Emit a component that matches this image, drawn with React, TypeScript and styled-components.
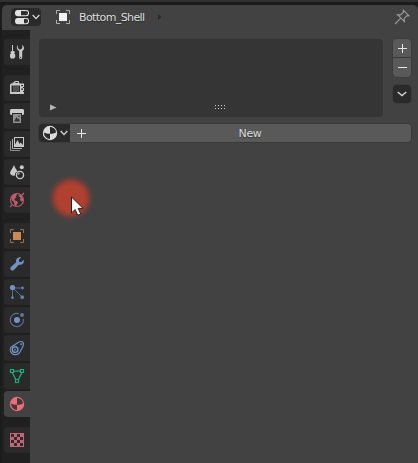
import React from "react";
import styled, { createGlobalStyle } from "styled-components";

const GlobalStyle = createGlobalStyle`
  * { box-sizing: border-box; }
  html, body { margin: 0; background: #1e1e1e; overflow: hidden; }
  body { font-family: "DejaVu Sans", sans-serif; font-size: 11px; color: #dcdcdc; }
  svg { display: block; flex: none; }
  button { font: inherit; color: inherit; padding: 0; margin: 0; border: 0; cursor: default; }
`;

const Editor = styled.div`
  position: relative;
  width: 418px;
  height: 463px;
  display: flex;
  flex-direction: column;
  border-top: 2px solid #303030;
  padding: 3px 0 0 2px;
  background: #1c1c1c;
`;

const Header = styled.header`
  flex: none;
  height: 25px;
  display: flex;
  align-items: center;
  padding: 0 8px 1px 9px;
  background: #424242;
  border-radius: 5px 5px 0 0;
`;

const EditorSelect = styled.button`
  display: flex;
  align-items: center;
  gap: 3px;
  width: 30px;
  height: 18px;
  padding-left: 3px;
  background: #2a2a2a;
  border-radius: 4px;
`;

const Crumb = styled.div`
  display: flex;
  align-items: center;
  flex: 1;
  padding-left: 14px;
`;

const CrumbName = styled.span`
  width: 79px;
  margin-left: 8px;
  padding-top: 1px;
  line-height: 14px;
  white-space: nowrap;
  text-shadow: 0 1px 1px rgba(0, 0, 0, 0.35);
  letter-spacing: -0.6px;
`;

const Body = styled.div`
  flex: 1;
  display: flex;
  min-height: 0;
`;

const TabBar = styled.nav`
  width: 28px;
  display: flex;
  flex-direction: column;
  gap: 10px;
  padding: 9px 0 0 2px;
  background: #202020;
`;

const TabGroup = styled.div`
  display: flex;
  flex-direction: column;
  gap: 2px;
`;

const Tab = styled.button<{ $active?: boolean; $color: string }>`
  width: 26px;
  height: 26px;
  display: flex;
  align-items: center;
  justify-content: center;
  border-radius: 4px 0 0 4px;
  background: ${(p) => (p.$active ? "#424242" : "#2a2a2a")};
  color: ${(p) => p.$color};
`;

const Panel = styled.main`
  flex: 1;
  display: flex;
  flex-direction: column;
  gap: 7px;
  padding: 9px 6px 0 9px;
  background: #424242;
`;

const SlotArea = styled.section`
  display: flex;
  gap: 10px;
  height: 78px;
`;

const SlotList = styled.div`
  width: 344px;
  display: grid;
  grid-template-columns: 164px 12px 1fr;
  align-items: end;
  padding: 0 11px 6px;
  background: #353535;
  border-radius: 4px;
`;

const SlotTools = styled.div`
  width: 18px;
  display: flex;
  flex-direction: column;
`;

const ToolButton = styled.button<{ $place: "top" | "bottom" | "menu" }>`
  width: 18px;
  height: ${(p) => (p.$place === "bottom" ? 19 : 18)}px;
  display: flex;
  align-items: center;
  justify-content: center;
  margin-top: ${(p) => ({ top: 0, bottom: 1, menu: 8 })[p.$place]}px;
  background: ${(p) => (p.$place === "menu" ? "#2a2a2a" : "#595959")};
  box-shadow: 0 0 0 0.5px #373737;
  border-radius: ${(p) => ({ top: "4px 4px 0 0", bottom: "0 0 4px 4px", menu: "4px" })[p.$place]};
`;

const MaterialRow = styled.div`
  display: flex;
  height: 18px;
  width: 372px;
  border-radius: 4px;
  box-shadow: 0 0 0 1px #3a3a3a;
`;

const BrowseButton = styled.button`
  width: 31px;
  display: flex;
  align-items: center;
  gap: 2px;
  padding-left: 3px;
  background: #2a2a2a;
  border-radius: 4px 0 0 4px;
`;

const NewButton = styled.button`
  flex: 1;
  display: grid;
  grid-template-columns: 12px 1fr;
  align-items: center;
  padding: 0 1px 0 6px;
  background: #595959;
  border-radius: 0 4px 4px 0;
  text-shadow: 0 1px 1px rgba(0, 0, 0, 0.4);
`;

const NewLabel = styled.span`
  padding-left: 2px;
  letter-spacing: -0.3px;
`;

const ClickGlow = styled.div`
  position: absolute;
  left: 48px;
  top: 173px;
  width: 46px;
  height: 46px;
  border-radius: 50%;
  background: radial-gradient(circle closest-side, #b0402f 0 58%, rgba(170, 62, 47, 0.78) 72%, rgba(150, 60, 48, 0.32) 87%, transparent 100%);
`;

const Pointer = styled.svg`
  position: absolute;
  left: 70px;
  top: 193px;
`;

const Icon = ({ children, size = 16 }: { children: React.ReactNode; size?: number }) => (
  <svg width={size} height={size} viewBox="0 0 16 16" fill="currentColor">
    {children}
  </svg>
);

const Chevron = ({ width = 8 }: { width?: number }) => (
  <svg width={width} height="6" viewBox={`0 0 ${width} 6`} fill="none" stroke="#d8d8d8" strokeWidth="1.3">
    <path d={`M.7 1 ${width / 2} 4.6 ${width - 0.7} 1`} />
  </svg>
);

const Plus = () => (
  <svg width="11" height="11" viewBox="0 0 11 11" stroke="#e6e6e6">
    <path d="M1 5.5H10M5.5 1V10" />
  </svg>
);

const EditorIcon = () => (
  <svg width="15" height="16" viewBox="0 0 15 16">
    <rect x="1" y="1" width="14" height="6.2" rx="2.9" fill="#e2e2e2" />
    <rect x="1" y="9" width="14" height="6.2" rx="2.9" fill="#e2e2e2" />
    <path d="M7 2h5a2.1 2.1 0 0 1 0 4.2H7z" fill="#303030" />
    <path d="M10 10h2a2.1 2.1 0 0 1 0 4.2h-2z" fill="#303030" />
  </svg>
);

const ObjectIcon = ({ solid }: { solid?: string }) => (
  <Icon>
    <path d="M1.5 5V1.5H5M11 1.5h3.5V5M14.5 11v3.5H11M5 14.5H1.5V11" fill="none" stroke="currentColor" opacity=".7" />
    <rect x="4" y="4" width="8" height="8" fill={solid ?? "currentColor"} />
  </Icon>
);

const MaterialIcon = ({ dark }: { dark: string }) => (
  <Icon>
    <circle cx="8" cy="8" r="7.2" />
    <path d="M8 2.1c3.4 0 5.9 2.4 6 5.4-1.8 1-3.8 1.4-6 1.3z" fill={dark} />
    <path d="M2 7.6c1.8.9 3.8 1.3 6 1.2V14C4.600 14 2 11.200 2 7.600z" fill={dark} />
  </Icon>
);

const ToolIcon = () => (
  <Icon>
    <path d="M3 1h1v6h1l1 1.2-.8 1.3 1 .9v2.7L5 14.5H2L1 13v-2.6l1-.9-.7-1.3L2 7.2h1z" />
    <path d="M8.8 1v3l1.6 1.6h1.3L13.3 4V1c1.3 1 1.9 2.2 1.6 3.7-.1 1-.8 1.8-1.7 2.3v7c-.4 1.4-2.6 1.4-3 0V7C8 6.2 7 3 8.8 1z" />
    <circle cx="11.7" cy="13.4" r=".6" fill="#2a2a2a" />
  </Icon>
);

const RenderIcon = () => (
  <Icon>
    <path fillRule="evenodd" d="M1 4.500 2 3.500h1.500V2.500H5L5.500 1h4l1 2.500H15V7h-1v1h1v3h-1v1h1v2H1zM2.500 5.500v6.500h8.500V5.500zM6.300 2v1h2.500V2zM12.300 5v1.300H14V5zM12.300 8.500v1.500H14V8.500z" />
    <path d="M4 6.500h6v1H4zM4 8.500h6v1H4zM4 10.500h6v1H4z" opacity=".5" />
  </Icon>
);

const OutputIcon = () => (
  <Icon>
    <path d="M2 1h12l1 1v4l-1 1h-1V5H3v2H2L1 6V2z" />
    <path d="M4 6h8v9H4z" opacity=".65" />
    <path d="M5 13.5 7.5 9l1.4 2.2.8-1L11 13.5z" fill="#333" />
    <circle cx="10" cy="8.4" r=".8" fill="#333" />
  </Icon>
);

const LayersIcon = () => (
  <Icon>
    <path fillRule="evenodd" d="M5 1h10v10H5zM6 2v6.5L8.5 4l2 4 1.2-1.5L14 9V2z" />
    <path d="M3.5 3v9.5H13" fill="none" stroke="currentColor" opacity=".85" />
    <path d="M1.5 5v9.5H11" fill="none" stroke="currentColor" opacity=".65" />
  </Icon>
);

const SceneIcon = () => (
  <Icon>
    <path d="M5 1c1 3 2.6 4.7 3.5 6.4C6.6 8 5.6 9.5 6 11.5c-2 .5-4-.2-4.7-1.8C.5 7.5 3.5 5 5 1z" />
    <circle cx="12.8" cy="3.2" r="2" />
    <circle cx="11" cy="11" r="3.6" fill="none" stroke="currentColor" strokeWidth="1.3" />
    <path d="M9 11a2 2 0 0 1 2-2" fill="none" stroke="currentColor" strokeWidth=".8" />
  </Icon>
);

const WorldIcon = () => (
  <Icon>
    <circle cx="8" cy="8" r="6.5" fill="none" stroke="currentColor" strokeWidth="1.1" />
    <path d="M2 5 4.500 2.300 7.500 1.800 8.200 3 6.800 4.200 7.600 5.400 5.800 6.600 5.400 8.200 7.800 9l1.200 1.400L7.600 13l-.6 1.400-1.400-.8L5 10.200 2.800 8.200zM10 2.200l2.700 1.400L14.200 7l-.5 2.300-1.500.2-1.400-2 .9-1.500L9.600 4z" />
    <path d="m1 15 2-2M13 3l2-2" stroke="currentColor" strokeWidth="1.200" />
  </Icon>
);

const WrenchIcon = () => (
  <Icon>
    <path d="M12.2 1.4 9.8 3.8l.3 2 2.1.4 2.5-2.4c.9 3.4-1.8 5.7-4.8 4.9l-5 5.2c-1.8 1.9-4.8-.6-3-2.8l5.3-4.8C6.3 3.4 8.7.6 12.2 1.4z" />
  </Icon>
);

const ParticlesIcon = () => (
  <Icon>
    <path d="M3.5 4H14M3.5 4v10M4 4l9 9" fill="none" stroke="currentColor" opacity=".65" />
    <circle cx="3.5" cy="3.5" r="2.6" />
    <circle cx="13.5" cy="4" r="1.4" opacity=".8" />
    <circle cx="3.5" cy="13.7" r="1.4" opacity=".8" />
    <circle cx="13.2" cy="13.2" r="1.9" opacity=".8" />
  </Icon>
);

const PhysicsIcon = () => (
  <Icon>
    <path d="M9.8 1.700A6.6 6.6 0 1 0 14.300 6.8" fill="none" stroke="currentColor" strokeWidth="1.1" opacity=".7" />
    <circle cx="8" cy="8" r="3" />
    <circle cx="13" cy="3" r="1.9" opacity=".75" />
  </Icon>
);

const ConstraintIcon = () => (
  <Icon>
    <path d="M1.9 7.200 9.500 2.2c3.500-1.8 5.800.2 4.800 3.500L10.9 12c-1.4 2.8-5.500 3.600-8 1.200C1.100 11.7.8 9 1.900 7.200z" fill="none" stroke="currentColor" strokeWidth="1.2" />
    <circle cx="6.1" cy="9.6" r="2.8" fill="none" stroke="currentColor" strokeWidth="1.5" />
    <circle cx="6.1" cy="9.6" r=".9" />
    <circle cx="12.2" cy="4.3" r="1" />
  </Icon>
);

const MeshIcon = () => (
  <Icon>
    <path d="M4.5 3.2h7M3.5 5l3.4 6.7M12.7 5l-3.5 6.7" fill="none" stroke="currentColor" strokeWidth="1.3" />
    <path d="M1.5 1.5h3v3h-3zM11.5 1.5h3v3h-3zM6.5 11.5h3v3h-3z" fill="#2a2a2a" stroke="currentColor" strokeWidth="1.2" />
  </Icon>
);

const TextureIcon = () => (
  <Icon>
    <path d="M1 1h14v14H1z" />
    <path
      fill="#35292b"
      d="M2 2h3v3H2zM8 2h3v3H8zM5 5h3v3H5zM11 5h3v3h-3zM2 8h3v3H2zM8 8h3v3H8zM5 11h3v3H5zM11 11h3v3h-3z"
    />
  </Icon>
);

const grey = "#cacaca";
const blue = "#7093c6";

const tabGroups = [
  [{ name: "Tool", color: grey, icon: <ToolIcon /> }],
  [
    { name: "Render", color: grey, icon: <RenderIcon /> },
    { name: "Output", color: grey, icon: <OutputIcon /> },
    { name: "View Layer", color: grey, icon: <LayersIcon /> },
    { name: "Scene", color: grey, icon: <SceneIcon /> },
    { name: "World", color: "#bd5b6b", icon: <WorldIcon /> },
  ],
  [
    { name: "Object", color: "#c98a58", icon: <ObjectIcon /> },
    { name: "Modifiers", color: blue, icon: <WrenchIcon /> },
    { name: "Particles", color: blue, icon: <ParticlesIcon /> },
    { name: "Physics", color: blue, icon: <PhysicsIcon /> },
    { name: "Constraints", color: blue, icon: <ConstraintIcon /> },
    { name: "Object Data", color: "#19b07f", icon: <MeshIcon /> },
    { name: "Material", color: "#e76f79", icon: <MaterialIcon dark="#49353a" />, active: true },
  ],
  [{ name: "Texture", color: "#c06675", icon: <TextureIcon /> }],
];

export default function App() {
  return (
    <Editor>
      <GlobalStyle />
      <Header>
        <EditorSelect aria-label="Editor type">
          <EditorIcon />
          <Chevron />
        </EditorSelect>
        <Crumb>
          <ObjectIcon solid="#f2f2f2" />
          <CrumbName>Bottom_Shell</CrumbName>
          <svg width="4" height="6" viewBox="0 0 4 6">
            <path d="M0 0 3.5 3 0 6z" fill="#2c2c2c" />
          </svg>
        </Crumb>
        <svg width="16" height="16" viewBox="0 0 16 16" fill="none" stroke="#999" strokeWidth="1.1">
          <path d="m9.3 1.2 5.5 5.5-2.1.2-2.5 2.5.3 3.2-7-7 3.2.3 2.5-2.5zM6.8 9.2 1 15" />
        </svg>
      </Header>
      <Body>
        <TabBar>
          {tabGroups.map((group) => (
            <TabGroup key={group[0].name}>
              {group.map((tab) => (
                <Tab key={tab.name} aria-label={tab.name} $color={tab.color} $active={"active" in tab}>
                  {tab.icon}
                </Tab>
              ))}
            </TabGroup>
          ))}
        </TabBar>
        <Panel>
          <SlotArea>
            <SlotList>
              <svg width="7" height="7" viewBox="0 0 7 7">
                <path d="M0 .5 6.5 3.5 0 6.5z" fill="#b5b5b5" />
              </svg>
              <svg width="12" height="7" viewBox="0 0 12 7">
                <path d="M1 1.5h11M1 4.5h11" stroke="#d4d4d4" strokeDasharray="1 2" />
              </svg>
            </SlotList>
            <SlotTools>
              <ToolButton $place="top" aria-label="Add slot">
                <Plus />
              </ToolButton>
              <ToolButton $place="bottom" aria-label="Remove slot">
                <svg width="11" height="11" viewBox="0 0 11 11" stroke="#e6e6e6">
                  <path d="M1 5.5H10" />
                </svg>
              </ToolButton>
              <ToolButton $place="menu" aria-label="Slot specials">
                <Chevron width={10} />
              </ToolButton>
            </SlotTools>
          </SlotArea>
          <MaterialRow>
            <BrowseButton aria-label="Browse material">
              <MaterialIcon dark="#292929" />
              <Chevron />
            </BrowseButton>
            <NewButton>
              <Plus />
              <NewLabel>New</NewLabel>
            </NewButton>
          </MaterialRow>
        </Panel>
      </Body>
      <ClickGlow />
      <Pointer width="14" height="23" viewBox="0 0 14 23">
        <path d="M1.5 2v16l3.7-3.5 2.5 5.8 3-1.3-2.5-5.6h4.9z" fill="#fff" stroke="#321d1c" />
      </Pointer>
    </Editor>
  );
}
